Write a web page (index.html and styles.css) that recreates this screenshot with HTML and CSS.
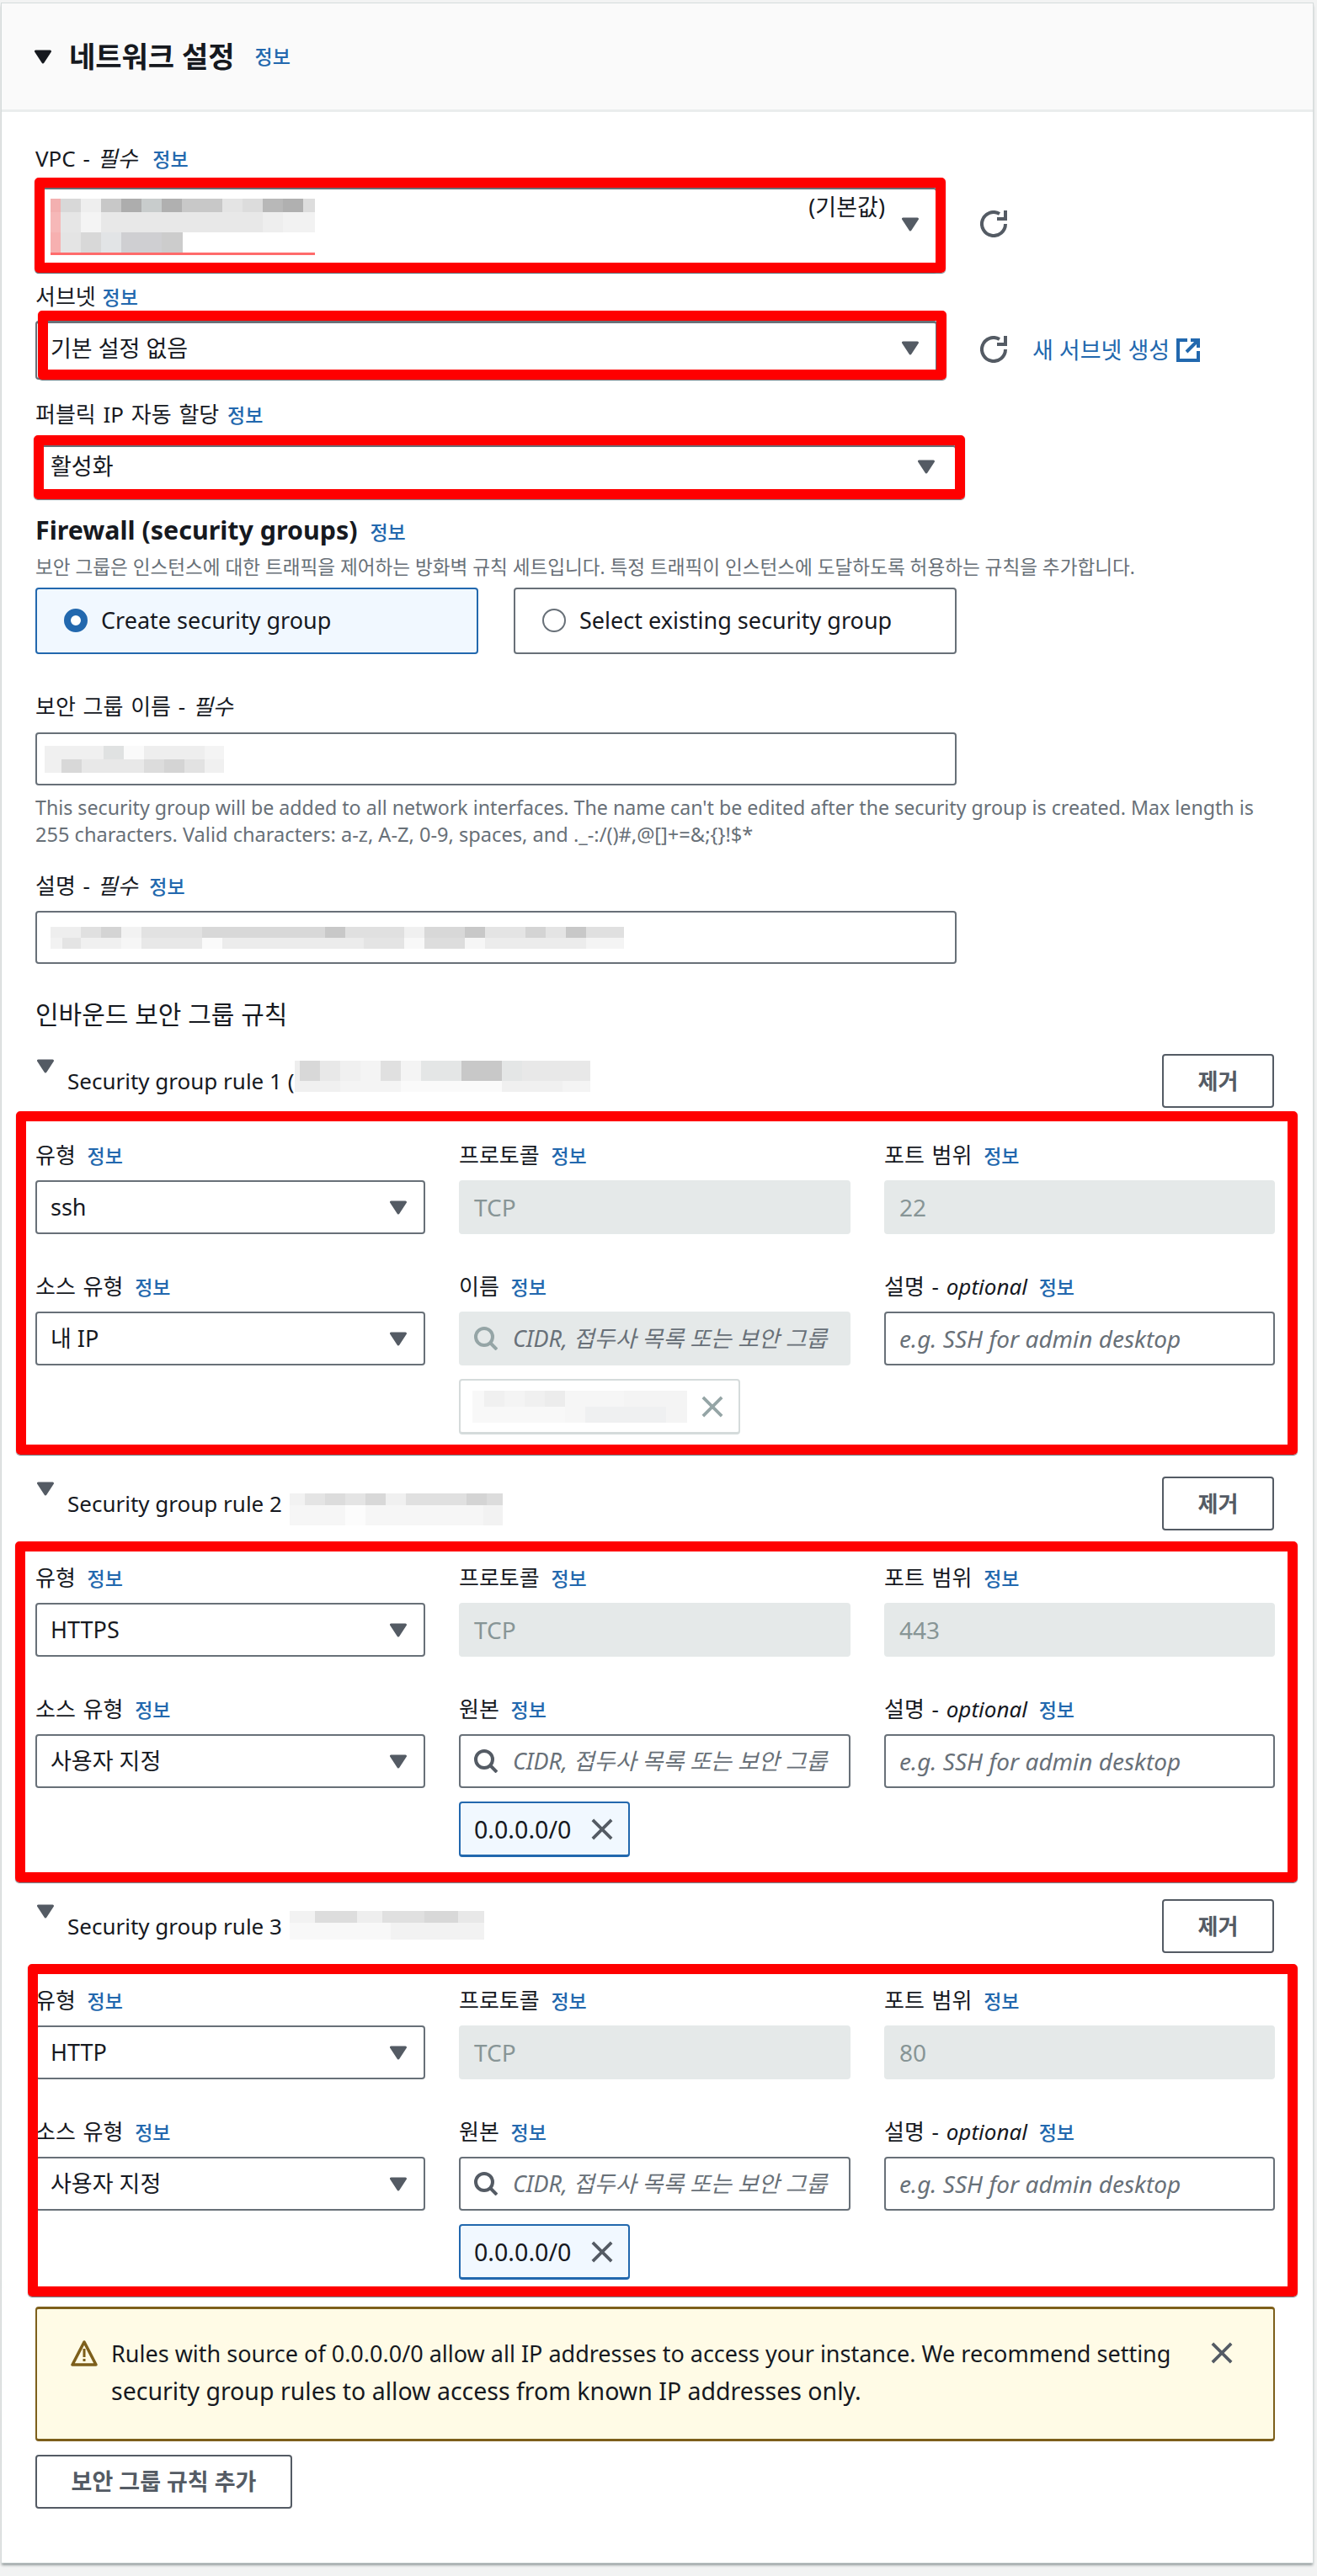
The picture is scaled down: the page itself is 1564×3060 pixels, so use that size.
FILE: index.html
```html
<!doctype html>
<html lang="ko">
    <head>
        <meta charset="UTF-8" />
        <title>네트워크 설정</title>
        <link rel="stylesheet" href="styles.css">
    </head>
    <body>
        <svg class="defs" width="0" height="0">
            <symbol id="caret" viewBox="0 0 20 16"><path d="M1.5 1.5h17L10 14.5z" fill="currentColor" stroke="currentColor" stroke-width="3" stroke-linejoin="round"/></symbol>
            <symbol id="refresh" viewBox="0 0 32 32"><path d="M30 16A14 14 0 1 1 23 3.9" fill="none" stroke="currentColor" stroke-width="4"/><path d="M30 0v10H20" fill="none" stroke="currentColor" stroke-width="4"/></symbol>
            <symbol id="external" viewBox="0 0 28 28"><path d="M13 2H2v24h24V15" fill="none" stroke="currentColor" stroke-width="4"/><path d="M17 2h9v9M26 2L12 16" fill="none" stroke="currentColor" stroke-width="4"/></symbol>
            <symbol id="search" viewBox="0 0 28 28"><circle cx="12" cy="12" r="10" fill="none" stroke="currentColor" stroke-width="4"/><path d="M19 19l8 8" fill="none" stroke="currentColor" stroke-width="4"/></symbol>
            <symbol id="close" viewBox="0 0 28 28"><path d="M2 2l24 24M26 2L2 26" fill="none" stroke="currentColor" stroke-width="4"/></symbol>
            <symbol id="warning" viewBox="0 0 32 32"><path d="M16 3L2 30h28z" fill="none" stroke="currentColor" stroke-width="3.5" stroke-linejoin="round"/><path d="M16 11v10M16 23v3" fill="none" stroke="currentColor" stroke-width="3"/></symbol>
        </svg>

        <section class="panel">
            <header class="panel-head">
                <svg class="caret caret-head"><use href="#caret"/></svg>
                <h2>네트워크 설정</h2>
                <a class="info">정보</a>
            </header>

            <div class="panel-body">
                <div class="label label-vpc">VPC - <i>필수</i> <a class="info">정보</a></div>
                <div class="control-row">
                    <div class="mark mark-vpc">
                        <div class="select select-vpc">
                            <div class="mosaic mosaic-vpc"></div>
                            <span class="select-default">(기본값)</span>
                            <svg class="caret"><use href="#caret"/></svg>
                        </div>
                    </div>
                    <svg class="refresh refresh-vpc"><use href="#refresh"/></svg>
                </div>

                <div class="label label-subnet">서브넷 <a class="info">정보</a></div>
                <div class="control-row">
                    <div class="mark mark-subnet">
                        <div class="select select-subnet">
                            <span>기본 설정 없음</span>
                            <svg class="caret"><use href="#caret"/></svg>
                        </div>
                    </div>
                    <svg class="refresh"><use href="#refresh"/></svg>
                    <a class="new-link">새 서브넷 생성 <svg class="external"><use href="#external"/></svg></a>
                </div>

                <div class="label label-public">퍼블릭 IP 자동 할당 <a class="info">정보</a></div>
                <div class="mark mark-public">
                    <div class="select select-public">
                        <span>활성화</span>
                        <svg class="caret"><use href="#caret"/></svg>
                    </div>
                </div>

                <h3 class="firewall">Firewall (security groups) <a class="info">정보</a></h3>
                <p class="firewall-desc">보안 그룹은 인스턴스에 대한 트래픽을 제어하는 방화벽 규칙 세트입니다. 특정 트래픽이 인스턴스에 도달하도록 허용하는 규칙을 추가합니다.</p>
                <div class="tiles">
                    <div class="tile tile-on"><span class="radio radio-on"></span>Create security group</div>
                    <div class="tile"><span class="radio"></span>Select existing security group</div>
                </div>

                <div class="label label-name">보안 그룹 이름 - <i>필수</i></div>
                <div class="input input-wide"><div class="mosaic mosaic-name"></div></div>
                <p class="hint">This security group will be added to all network interfaces. The name can't be edited after the security group is created. Max length is 255 characters. Valid characters: a-z, A-Z, 0-9, spaces, and ._-:/()#,@[]+=&amp;;{}!$*</p>

                <div class="label label-desc">설명 - <i>필수</i> <a class="info">정보</a></div>
                <div class="input input-wide"><div class="mosaic mosaic-desc"></div></div>

                <h3 class="inbound">인바운드 보안 그룹 규칙</h3>

                <!-- rule 1 -->
                <div class="rule-head rule-head-first">
                    <svg class="caret caret-rule"><use href="#caret"/></svg>
                    <span class="rule-title">Security group rule 1 (</span>
                    <div class="mosaic mosaic-rule1"></div>
                    <button class="btn btn-remove">제거</button>
                </div>
                <div class="mark mark-rule mark-rule1">
                    <div class="rule-grid">
                        <div><div class="label-sm">유형 <a class="info">정보</a></div>
                            <div class="select"><span>ssh</span><svg class="caret"><use href="#caret"/></svg></div></div>
                        <div><div class="label-sm">프로토콜 <a class="info">정보</a></div>
                            <div class="input input-off">TCP</div></div>
                        <div><div class="label-sm">포트 범위 <a class="info">정보</a></div>
                            <div class="input input-off">22</div></div>
                        <div><div class="label-sm">소스 유형 <a class="info">정보</a></div>
                            <div class="select"><span>내 IP</span><svg class="caret"><use href="#caret"/></svg></div></div>
                        <div><div class="label-sm">이름 <a class="info">정보</a></div>
                            <div class="input input-off input-search"><svg class="search"><use href="#search"/></svg><em>CIDR, 접두사 목록 또는 보안 그룹</em></div>
                            <div class="token token-off"><div class="mosaic mosaic-token"></div><svg class="close"><use href="#close"/></svg></div></div>
                        <div><div class="label-sm">설명 - <i>optional</i> <a class="info">정보</a></div>
                            <div class="input"><em class="em-latin">e.g. SSH for admin desktop</em></div></div>
                    </div>
                </div>

                <!-- rule 2 -->
                <div class="rule-head">
                    <svg class="caret caret-rule"><use href="#caret"/></svg>
                    <span class="rule-title">Security group rule 2</span>
                    <div class="mosaic mosaic-rule2"></div>
                    <button class="btn btn-remove">제거</button>
                </div>
                <div class="mark mark-rule mark-rule2">
                    <div class="rule-grid">
                        <div><div class="label-sm">유형 <a class="info">정보</a></div>
                            <div class="select"><span>HTTPS</span><svg class="caret"><use href="#caret"/></svg></div></div>
                        <div><div class="label-sm">프로토콜 <a class="info">정보</a></div>
                            <div class="input input-off">TCP</div></div>
                        <div><div class="label-sm">포트 범위 <a class="info">정보</a></div>
                            <div class="input input-off">443</div></div>
                        <div><div class="label-sm">소스 유형 <a class="info">정보</a></div>
                            <div class="select"><span>사용자 지정</span><svg class="caret"><use href="#caret"/></svg></div></div>
                        <div><div class="label-sm">원본 <a class="info">정보</a></div>
                            <div class="input input-search"><svg class="search"><use href="#search"/></svg><em>CIDR, 접두사 목록 또는 보안 그룹</em></div>
                            <div class="token">0.0.0.0/0<svg class="close"><use href="#close"/></svg></div></div>
                        <div><div class="label-sm">설명 - <i>optional</i> <a class="info">정보</a></div>
                            <div class="input"><em class="em-latin">e.g. SSH for admin desktop</em></div></div>
                    </div>
                </div>

                <!-- rule 3 -->
                <div class="rule-head">
                    <svg class="caret caret-rule"><use href="#caret"/></svg>
                    <span class="rule-title">Security group rule 3</span>
                    <div class="mosaic mosaic-rule3"></div>
                    <button class="btn btn-remove">제거</button>
                </div>
                <div class="mark mark-rule mark-rule3">
                    <div class="rule-grid">
                        <div><div class="label-sm">유형 <a class="info">정보</a></div>
                            <div class="select"><span>HTTP</span><svg class="caret"><use href="#caret"/></svg></div></div>
                        <div><div class="label-sm">프로토콜 <a class="info">정보</a></div>
                            <div class="input input-off">TCP</div></div>
                        <div><div class="label-sm">포트 범위 <a class="info">정보</a></div>
                            <div class="input input-off">80</div></div>
                        <div><div class="label-sm">소스 유형 <a class="info">정보</a></div>
                            <div class="select"><span>사용자 지정</span><svg class="caret"><use href="#caret"/></svg></div></div>
                        <div><div class="label-sm">원본 <a class="info">정보</a></div>
                            <div class="input input-search"><svg class="search"><use href="#search"/></svg><em>CIDR, 접두사 목록 또는 보안 그룹</em></div>
                            <div class="token">0.0.0.0/0<svg class="close"><use href="#close"/></svg></div></div>
                        <div><div class="label-sm">설명 - <i>optional</i> <a class="info">정보</a></div>
                            <div class="input"><em class="em-latin">e.g. SSH for admin desktop</em></div></div>
                    </div>
                </div>

                <div class="alert">
                    <svg class="warning"><use href="#warning"/></svg>
                    <p>Rules with source of 0.0.0.0/0 allow all IP addresses to access your instance. We recommend setting security group rules to allow access from known IP addresses only.</p>
                    <svg class="close close-alert"><use href="#close"/></svg>
                </div>

                <button class="btn btn-add">보안 그룹 규칙 추가</button>
            </div>
        </section>
    </body>
</html>
```

FILE: styles.css
```css
* {
    box-sizing: border-box;
}

body {
    margin: 0;
    height: 3060px;
    overflow: hidden;
    background-color: #f2f3f3;
    color: #16191f;
    font-family: "Noto Sans", "Noto Sans CJK KR", sans-serif;
    font-size: 27px;
    line-height: 44px;
}

h2,
h3,
p {
    margin: 0;
}

.defs {
    position: absolute;
}

.panel {
    margin: 4px 0 0 2px;
    width: 1557px;
    background-color: #fff;
    box-shadow: 0 0 0 1px #d5dbdb, 0 3px 3px 0 #8d9697;
}

.panel-head {
    height: 129px;
    display: flex;
    align-items: center;
    padding: 0 0 0 39px;
    background-color: #fafafa;
    border-bottom: 3px solid #eaeded;
}

.panel-head h2 {
    font-size: 34px;
    font-weight: 700;
    margin: 0 24px 0 21px;
}

.panel-body {
    padding: 40px 0 64px 40px;
}

.info {
    color: #2268ae;
    font-size: 23px;
    font-weight: 500;
}

i,
em {
    font-style: italic;
}

/* labels */
.label,
.label-sm {
    height: 30px;
    line-height: 30px;
    font-size: 26px;
    word-spacing: 2px;
    white-space: nowrap;
}

.label .info,
.label-sm .info {
    margin-left: 5px;
}

.label-subnet .info {
    margin-left: -1px;
}

.label-public .info {
    margin-left: 1px;
}

.label-vpc .info {
    margin-left: 9px;
}

.label-sm {
    margin-bottom: 15px;
}

.label-vpc {
    margin-bottom: 20px;
}

.label-subnet {
    margin: 12px 0 14px;
}

.label-public {
    margin: 26px 0 22px;
}

.label-name {
    margin: 47px 0 16px;
}

.label-desc {
    margin: 30px 0 15px;
}

/* red annotation boxes drawn over the form */
.mark {
    position: relative;
}

.mark::after {
    content: "";
    position: absolute;
    border: 12px solid #f00;
    border-radius: 5px;
    box-shadow: 0 1px 1px #687078;
}

.mark-vpc::after {
    top: -12px;
    left: -1px;
    right: -10px;
    bottom: 1px;
}

.mark-subnet::after {
    top: -12px;
    left: 3px;
    right: -11px;
    bottom: 0;
}

.mark-public {
    width: 1094px;
}

.mark-public::after {
    top: -12px;
    left: -2px;
    right: -10px;
    bottom: 0;
}

.mark-rule {
    width: 1499px;
}

.mark-rule1::after {
    top: 4px;
    left: -23px;
    right: 0;
    bottom: -24px;
}

.mark-rule2::after {
    top: 13px;
    left: -24px;
    right: 0;
    bottom: -30px;
}

.mark-rule3::after {
    top: 13px;
    left: -9px;
    right: 0;
    bottom: -20px;
}

/* form controls */
.control-row {
    display: flex;
    align-items: center;
}

.control-row .mark {
    width: 1071px;
}

.select,
.input {
    height: 64px;
    display: flex;
    align-items: center;
    padding: 0 16px;
    background-color: #fff;
    border: 2px solid #687078;
    border-radius: 4px;
    white-space: nowrap;
}

.select {
    justify-content: space-between;
    padding-right: 20px;
}

.select-vpc {
    height: 102px;
    align-items: flex-start;
    padding-top: 11px;
}

.select-vpc .caret {
    margin: 22px 0 0;
}

.select-default {
    margin-left: auto;
    margin-right: 20px;
    margin-top: -6px;
    line-height: 32px;
}

.select-subnet {
    height: 70px;
    border-top-width: 3px;
    padding-bottom: 6px;
}

.select-public {
    padding: 0 24px 14px 16px;
}

.caret {
    width: 20px;
    height: 17px;
    flex: none;
    color: #545b64;
}

.caret-head {
    width: 20px;
    color: #16191f;
}

.caret-rule {
    margin: 6px 16px 0 2px;
}

.refresh {
    width: 32px;
    height: 32px;
    margin-left: 51px;
    margin-bottom: 2px;
    color: #545b64;
}

.refresh-vpc {
    margin-bottom: 16px;
}

.new-link {
    margin-left: 30px;
    display: flex;
    align-items: center;
    gap: 8px;
    color: #2268ae;
    font-size: 27px;
}

.external {
    width: 28px;
    height: 28px;
}

.firewall {
    margin-top: 18px;
    font-size: 30.4px;
    line-height: 38px;
    font-weight: 700;
}

.firewall .info {
    margin-left: 7px;
}

.firewall-desc {
    margin-top: 1px;
    font-size: 22.6px;
    color: #687078;
    white-space: nowrap;
}

.tiles {
    display: flex;
    gap: 42px;
    margin-top: 2px;
}

.tile {
    width: 526px;
    height: 79px;
    display: flex;
    align-items: center;
    gap: 16px;
    padding: 0 0 2px 32px;
    border: 2px solid #687078;
    border-radius: 4px;
}

.tile-on {
    background-color: #f1f8ff;
    border-color: #2268ae;
}

.radio {
    width: 28px;
    height: 28px;
    border-radius: 50%;
    border: 2px solid #687078;
    background-color: #fff;
}

.radio-on {
    border: 8px solid #2268ae;
}

.input-wide {
    width: 1094px;
    height: 63px;
}

.hint {
    margin-top: 10px;
    width: 1490px;
    font-size: 23.6px;
    line-height: 32px;
    color: #687078;
}

.hint::first-line {
    font-size: 23.2px;
}

.inbound {
    margin-top: 40px;
    font-size: 30px;
    line-height: 40px;
    font-weight: 400;
}

/* rules */
.rule-head {
    display: flex;
    align-items: flex-start;
    height: 64px;
    margin-top: 50px;
    padding-right: 46px;
}

.rule-head-first {
    margin-top: 27px;
}

.rule-title {
    margin-top: 12px;
    line-height: 40px;
    font-size: 26px;
    white-space: nowrap;
}

.btn {
    font: inherit;
    font-weight: 700;
    font-size: 27px;
    background-color: #fff;
    color: #545b64;
    border: 2px solid #545b64;
    border-radius: 4px;
    height: 64px;
    padding: 0;
}

.btn-remove {
    width: 133px;
    margin-left: auto;
    font-size: 26px;
}

.btn-add {
    display: block;
    margin-top: 16px;
    width: 305px;
}

.rule-grid {
    display: grid;
    grid-template-columns: 463px 465px 464px;
    column-gap: 40px;
    row-gap: 47px;
    padding-top: 41px;
}

.input-off {
    background-color: #e5e9e9;
    border-color: #e5e9e9;
    color: #879596;
    font-size: 28px;
}

.input em {
    font-size: 27px;
    color: #687078;
}

.input .em-latin {
    font-size: 28px;
}

.input-search {
    gap: 18px;
}

.search {
    width: 28px;
    height: 28px;
    flex: none;
    color: #545b64;
}

.input-off .search {
    color: #95a5a6;
}

.token {
    width: 203px;
    height: 66px;
    margin-top: 16px;
    display: flex;
    align-items: center;
    justify-content: space-between;
    padding: 0 18px 0 16px;
    background-color: #f1f8ff;
    border: 2px solid #2268ae;
    border-bottom-width: 3px;
    border-radius: 4px;
    font-size: 28.6px;
}

.token-off {
    width: 334px;
    padding: 0 18px 0 14px;
    background-color: #fff;
    border-color: #d5dbdb;
}

.close {
    width: 26px;
    height: 26px;
    flex: none;
    color: #545b64;
}

.token-off .close {
    color: #95a5a6;
}

.alert {
    width: 1472px;
    height: 160px;
    margin-top: 32px;
    display: flex;
    align-items: flex-start;
    padding: 31px 0 0 40px;
    background-color: #fffbe6;
    border: 2px solid #7d5f1b;
    border-top-width: 3px;
    border-bottom-width: 3px;
    border-radius: 4px;
}

.alert p {
    width: 1270px;
    margin: 0 36px 0 16px;
    font-size: 28.5px;
}

.alert p::first-line {
    font-size: 27px;
}

.warning {
    width: 32px;
    height: 32px;
    flex: none;
    margin-top: 5px;
    color: #7d5f1b;
}

.close-alert {
    margin-top: 8px;
}

/* blurred-out values */
.mosaic {
    flex: none;
}

.mosaic-vpc {
    width: 314px;
    height: 67px;
    background:
        linear-gradient(#ff6b6b, #ff6b6b) 0 100% / 100% 3px no-repeat,
        linear-gradient(90deg, #f3b0b0 0 12px, #d8d8d8 0 36px, #eee 0 60px, #c8c8c8 0 84px, #adadad 0 108px, #c8cccc 0 132px, #b0b0b0 0 156px, #c8c8c8 0 204px, #e4e4e4 0 228px, #dcdcdc 0 252px, #b8b8b8 0 276px, #b0b0b0 0 300px, #ddd 0 314px) 0 0 / 100% 16px no-repeat,
        linear-gradient(90deg, #f6b8b8 0 12px, #e6e6e6 0 36px, #f4f4f4 0 60px, #e8e8e8 0 252px, #eee 0 276px, #f2f2f2 0 314px) 0 16px / 100% 24px no-repeat,
        linear-gradient(90deg, #f6b0b0 0 12px, #e4e4e4 0 36px, #d8d8d8 0 60px, #e2e4e6 0 84px, #cfcfd2 0 132px, #ccc 0 157px, #fff 0) 0 40px / 100% 24px no-repeat;
}

.mosaic-name {
    width: 213px;
    height: 32px;
    margin-left: -7px;
    background:
        linear-gradient(90deg, #f0f0f0 0 70px, #e0e2e2 0 94px, #fafafa 0 118px, #eee 0 190px, #f4f4f4 0) 0 0 / 100% 16px no-repeat,
        linear-gradient(90deg, #f0f0f0 0 20px, #d8d8d8 0 44px, #e8e8e8 0 118px, #dcdcdc 0 142px, #d4d4d4 0 166px, #e2e2e2 0 190px, #f0f0f0 0) 0 16px / 100% 16px no-repeat;
}

.mosaic-desc {
    width: 681px;
    height: 26px;
    background:
        linear-gradient(90deg, #eee 0 36px, #e0e0e0 0 60px, #d4d4d4 0 84px, #f2f2f2 0 108px, #e2e2e2 0 180px, #d8d8d8 0 326px, #c8c8c8 0 350px, #e0e0e0 0 420px, #f0f0f0 0 444px, #d8d8d8 0 492px, #c8c8c8 0 516px, #e4e4e4 0 564px, #d4d4d4 0 588px, #e4e4e4 0 612px, #c8c8c8 0 636px, #e0e0e0 0) 0 0 / 100% 13px no-repeat,
        linear-gradient(90deg, #f2f2f2 0 14px, #e4e4e4 0 36px, #f0f0f0 0 84px, #f6f6f6 0 108px, #e8e8e8 0 180px, #fafafa 0 204px, #ececec 0 372px, #e4e4e4 0 420px, #f8f8f8 0 444px, #ddd 0 492px, #f6f6f6 0 516px, #ececec 0 636px, #f4f4f4 0) 0 13px / 100% 13px no-repeat;
}

.mosaic-rule1 {
    width: 351px;
    height: 37px;
    margin: 8px 0 0 1px;
    background:
        linear-gradient(90deg, #eee 0 6px, #d8d8d8 0 30px, #e8e8e8 0 54px, #f0f0f0 0 78px, #f4f4f4 0 102px, #e0e0e0 0 126px, #f4f4f4 0 150px, #e4e6e6 0 198px, #c8c8c8 0 246px, #e4e6e6 0 270px, #e8e8e8 0) 0 0 / 100% 24px no-repeat,
        linear-gradient(90deg, #f0f0f0 0 54px, #f4f4f4 0 126px, #fafafa 0 246px, #f0f0f0 0 318px, #f4f4f4 0) 0 24px / 100% 13px no-repeat;
}

.mosaic-rule2 {
    width: 253px;
    height: 38px;
    margin: 20px 0 0 9px;
    background:
        linear-gradient(90deg, #f2f2f2 0 18px, #e4e4e4 0 42px, #dcdcdc 0 66px, #e4e4e4 0 90px, #d8d8d8 0 114px, #f0f0f0 0 138px, #e0e0e0 0 210px, #d4d4d4 0 234px, #dcdcdc 0) 0 0 / 100% 14px no-repeat,
        linear-gradient(90deg, #f6f6f6 0 66px, #fcfcfc 0 90px, #f6f6f6 0 230px, #f2f2f2 0) 0 14px / 100% 24px no-repeat;
}

.mosaic-rule3 {
    width: 231px;
    height: 34px;
    margin: 14px 0 0 9px;
    background:
        linear-gradient(90deg, #f2f2f2 0 30px, #ddd 0 80px, #eee 0 110px, #e0e0e0 0 160px, #d8d8d8 0 200px, #e8e8e8 0) 0 0 / 100% 14px no-repeat,
        linear-gradient(90deg, #f8f8f8 0 120px, #f2f2f2 0) 0 14px / 100% 20px no-repeat;
}

.mosaic-token {
    width: 255px;
    height: 38px;
    background:
        linear-gradient(90deg, #f8f8f8 0 14px, #f0f0f0 0 38px, #f4f4f4 0 62px, #f0f0f0 0 86px, #ececec 0 110px, #f6f6f6 0 180px, #f4f4f4 0) 0 0 / 100% 19px no-repeat,
        linear-gradient(90deg, #f8f8f8 0 110px, #f6f6f6 0 134px, #eff0f1 0 230px, #f4f4f4 0) 0 19px / 100% 19px no-repeat;
}
```
